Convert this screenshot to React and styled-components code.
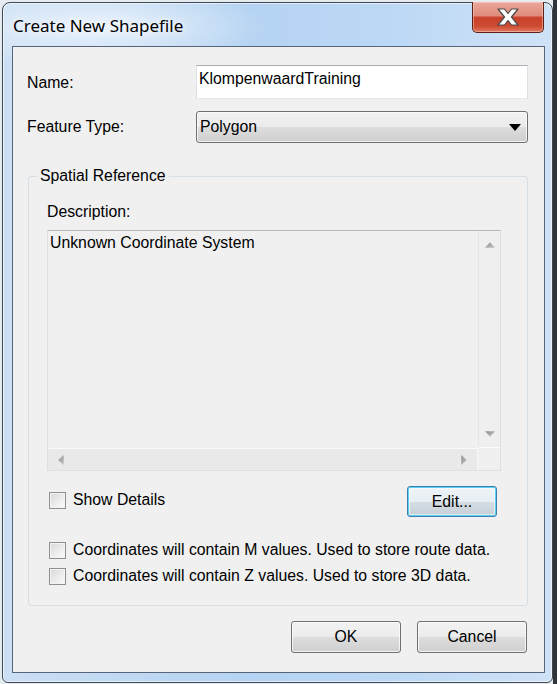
import React from 'react';
import styled, { createGlobalStyle } from 'styled-components';

const Global = createGlobalStyle`
  html, body { margin: 0; padding: 0; }
  body {
    width: 557px;
    height: 684px;
    overflow: hidden;
    background: linear-gradient(to right, #e6ebf0 0, #e6ebf0 553px, #2f353b 553px);
    font-family: "Liberation Sans", Arial, sans-serif;
    color: #000;
  }
  * { box-sizing: border-box; }
`;

const Window = styled.div`
  margin: 2px 0 0 2px;
  width: 551px;
  height: 681px;
  border: 1px solid #3f4955;
  border-radius: 8px 8px 6px 6px;
  background:
    radial-gradient(ellipse 170px 42px at 95px 24px, rgba(236, 244, 252, 0.95), rgba(236, 244, 252, 0) 100%),
    linear-gradient(to right, #cbdff4 0%, #b5d3f2 45%, #bcd8f5 70%, #cfe2f6 100%);
  box-shadow: inset 0 0 0 1px rgba(255, 255, 255, 0.6);
  display: flex;
  flex-direction: column;
`;

const TitleBar = styled.div`
  height: 43px;
  display: flex;
  justify-content: space-between;
  align-items: flex-start;
  padding: 0 8px 0 10px;
`;

const Title = styled.div`
  align-self: center;
  margin-top: 1px;
  font-family: "Noto Sans", "Open Sans", sans-serif;
  font-size: 17px;
  color: #000;
  text-shadow: 0 0 6px rgba(255, 255, 255, 0.9), 0 0 12px rgba(255, 255, 255, 0.8);
`;

const CloseButton = styled.div`
  margin-top: -1px;
  width: 72px;
  height: 31px;
  border: 1px solid #5e2016;
  border-top: none;
  border-radius: 0 0 5px 5px;
  background: linear-gradient(to bottom, #eba79b 0%, #df8c7c 45%, #c9412a 52%, #cd4a32 80%, #e07a5d 100%);
  box-shadow: inset 0 0 0 1px rgba(255, 220, 210, 0.45);
  display: flex;
  align-items: center;
  justify-content: center;
`;

const Client = styled.div`
  flex: 1;
  margin: 0 7px 9px 9px;
  border: 1px solid #56657a;
  background: #f0f0f0;
  padding: 18px 16px 0 14px;
  display: flex;
  flex-direction: column;
  font-size: 15.8px;
`;

const FormGrid = styled.div`
  display: grid;
  grid-template-columns: 169px 1fr;
  grid-template-rows: 34px 32px;
  row-gap: 12px;
  align-items: center;
`;

const Label = styled.div`
  line-height: 18px;
  padding-top: ${p => p.$offset || 0}px;
`;

const TextBox = styled.div`
  height: 34px;
  background: #fff;
  border: 1px solid #dbdfe6;
  border-top-color: #abadb3;
  border-bottom-color: #e3e9ef;
  padding: 4px 2px;
  line-height: 18px;
`;

const Combo = styled.div`
  height: 32px;
  border: 1px solid #707070;
  border-radius: 3px;
  background: linear-gradient(to bottom, #f2f2f2 0%, #ebebeb 50%, #dddddd 51%, #cfcfcf 100%);
  box-shadow: inset 0 0 0 1px rgba(255, 255, 255, 0.7);
  display: flex;
  align-items: center;
  justify-content: space-between;
  padding: 0 6px 0 3px;
  line-height: 18px;
`;

const Group = styled.fieldset`
  margin: 24px 0 0 1px;
  padding: 0;
  min-width: 0;
  border: 1px solid #d5dfe5;
  border-radius: 3px;
`;

const Legend = styled.legend`
  margin-left: 8px;
  padding: 0 3px;
  line-height: 18px;
`;

const GroupBody = styled.div`
  padding: 18px 26px 20px 18px;
  display: flex;
  flex-direction: column;
`;

const DescLabel = styled.div`
  line-height: 18px;
  margin-bottom: 9px;
`;

const DescBox = styled.div`
  height: 241px;
  border: 1px solid #dcdfe4;
  border-top-color: #b5b8bd;
  display: grid;
  grid-template-columns: 1fr 22px;
  grid-template-rows: 1fr 22px;
  background: #f0f0f0;
`;

const DescText = styled.div`
  padding: 3px 2px;
  line-height: 18px;
`;

const VScroll = styled.div`
  background: #efefef;
  border-left: 1px solid #e6e6e6;
  border-bottom: 1px solid #fbfbfb;
  display: flex;
  flex-direction: column;
  justify-content: space-between;
  align-items: center;
  padding: 11px 0 10px;
`;

const HScroll = styled.div`
  background: #e9e9e9;
  border-top: 1px solid #fafafa;
  border-right: 1px solid #f7f7f7;
  display: flex;
  justify-content: space-between;
  align-items: center;
  padding: 0 10px 0 10px;
`;

const Corner = styled.div`
  background: #f0f0f0;
`;

const ShowRow = styled.div`
  margin-top: 15px;
  height: 31px;
  display: flex;
  align-items: center;
  justify-content: space-between;
  padding: 0 4px 0 2px;
`;

const CheckRow = styled.div`
  margin-top: ${p => p.$gap}px;
  height: 18px;
  display: flex;
  align-items: center;
  padding-left: 2px;
`;

const CheckLabel = styled.label`
  display: flex;
  align-items: center;
  gap: 7px;
  line-height: 18px;
  margin-top: ${p => p.$shift || 0}px;
`;

const CheckBox = styled.span`
  width: 17px;
  height: 17px;
  border: 1px solid #8f8f8f;
  background: linear-gradient(135deg, #d8d8d8 0%, #ececec 55%, #fbfbfb 100%);
  box-shadow: inset 0 0 0 1px #f4f4f4;
  flex: none;
`;

const Button = styled.div`
  width: ${p => p.$w}px;
  height: ${p => p.$h}px;
  border: 1px solid ${p => (p.$default ? '#3c7fb1' : '#707070')};
  border-radius: 3px;
  background: ${p =>
    p.$default
      ? 'linear-gradient(to bottom, #eef4f8 0%, #e6eef3 50%, #d5dde3 51%, #c6d0d7 100%)'
      : 'linear-gradient(to bottom, #f2f2f2 0%, #ebebeb 50%, #dddddd 51%, #cfcfcf 100%)'};
  box-shadow: ${p =>
    p.$default ? 'inset 0 0 0 1px #5ad0f0, inset 0 0 0 2px rgba(255,255,255,0.5)' : 'inset 0 0 0 1px rgba(255,255,255,0.75)'};
  display: flex;
  align-items: center;
  justify-content: center;
  line-height: 18px;
`;

const ButtonRow = styled.div`
  margin-top: 15px;
  display: flex;
  justify-content: flex-end;
  gap: 16px;
  padding-right: 1px;
`;

const Arrow = ({ dir }) => {
  const pts = {
    up: '0,5 4.5,0 9,5',
    down: '0,0 9,0 4.5,5',
    left: '5,0 5,9 0,4.5',
    right: '0,0 5,4.5 0,9',
  }[dir];
  const vertical = dir === 'up' || dir === 'down';
  return (
    <svg width={vertical ? 10 : 6} height={vertical ? 6 : 10} viewBox={vertical ? '0 0 9 5' : '0 0 5 9'}>
      <defs>
        <linearGradient id={`ag-${dir}`} x1="0" y1="0" x2="1" y2="1">
          <stop offset="0" stopColor="#8f8f8f" />
          <stop offset="1" stopColor="#c4c4c4" />
        </linearGradient>
      </defs>
      <polygon points={pts} fill={`url(#ag-${dir})`} />
    </svg>
  );
};

const CloseGlyph = () => (
  <svg width="24" height="18" viewBox="0 0 24 18">
    <polygon
      points="2,1 8.5,1 12,5.5 15.5,1 22,1 15.5,9 22,17 15.5,17 12,12.5 8.5,17 2,17 8.5,9"
      fill="#ffffff"
      stroke="#4a4a4a"
      strokeWidth="1.2"
      strokeLinejoin="round"
    />
  </svg>
);

const ComboArrow = () => (
  <svg width="12" height="7" viewBox="0 0 12 7">
    <polygon points="0,0 12,0 6,7" fill="#000" />
  </svg>
);

export default function App() {
  return (
    <>
      <Global />
      <Window>
        <TitleBar>
          <Title>Create New Shapefile</Title>
          <CloseButton>
            <CloseGlyph />
          </CloseButton>
        </TitleBar>
        <Client>
          <FormGrid>
            <Label $offset={2}>Name:</Label>
            <TextBox>KlompenwaardTraining</TextBox>
            <Label>Feature Type:</Label>
            <Combo>
              <span>Polygon</span>
              <ComboArrow />
            </Combo>
          </FormGrid>

          <Group>
            <Legend>Spatial Reference</Legend>
            <GroupBody>
              <DescLabel>Description:</DescLabel>
              <DescBox>
                <DescText>Unknown Coordinate System</DescText>
                <VScroll>
                  <Arrow dir="up" />
                  <Arrow dir="down" />
                </VScroll>
                <HScroll>
                  <Arrow dir="left" />
                  <Arrow dir="right" />
                </HScroll>
                <Corner />
              </DescBox>
              <ShowRow>
                <CheckLabel $shift={-3}>
                  <CheckBox />
                  Show Details
                </CheckLabel>
                <Button $w={90} $h={31} $default>Edit...</Button>
              </ShowRow>
              <CheckRow $gap={24}>
                <CheckLabel>
                  <CheckBox />
                  Coordinates will contain M values. Used to store route data.
                </CheckLabel>
              </CheckRow>
              <CheckRow $gap={8}>
                <CheckLabel>
                  <CheckBox />
                  Coordinates will contain Z values. Used to store 3D data.
                </CheckLabel>
              </CheckRow>
            </GroupBody>
          </Group>

          <ButtonRow>
            <Button $w={110} $h={32}>OK</Button>
            <Button $w={110} $h={32}>Cancel</Button>
          </ButtonRow>
        </Client>
      </Window>
    </>
  );
}
